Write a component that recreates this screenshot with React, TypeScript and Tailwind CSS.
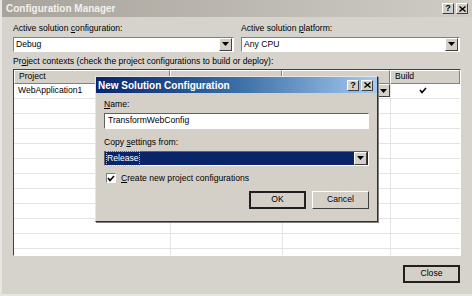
import React from "react";

const font = "font-['Liberation_Sans','Arial',sans-serif]";

const Arrow = () => (
  <div className="flex h-[13px] w-[13px] items-center justify-center border border-t-white border-l-white border-b-[#404040] border-r-[#404040] bg-[#d4d0c8]">
    <svg width="7" height="4" viewBox="0 0 7 4">
      <path d="M0 0h7L3.5 4z" fill="#000" />
    </svg>
  </div>
);

const Combo = ({ text }: { text: string }) => (
  <div className="flex h-[15px] items-center justify-between border border-t-[#808080] border-l-[#808080] border-b-white border-r-white bg-white pl-[2px] pr-[1px]">
    <span>{text}</span>
    <Arrow />
  </div>
);

const TitleButtons = () => (
  <div className="flex gap-[2px]">
    <div className="flex h-[11px] w-[12px] items-center justify-center border border-t-white border-l-white border-b-[#404040] border-r-[#404040] bg-[#d4d0c8] text-[9px] font-bold leading-none text-black">
      ?
    </div>
    <div className="flex h-[11px] w-[12px] items-center justify-center border border-t-white border-l-white border-b-[#404040] border-r-[#404040] bg-[#d4d0c8]">
      <svg width="7" height="6" viewBox="0 0 7 6">
        <path d="M0.5 0.5l6 5M6.5 0.5l-6 5" stroke="#000" strokeWidth="1.4" />
      </svg>
    </div>
  </div>
);

const Button = ({ label, isDefault }: { label: string; isDefault?: boolean }) => (
  <div
    className={
      "flex h-[18px] w-[57px] items-center justify-center bg-[#d4d0c8] " +
      (isDefault ? "border-2 border-[#202020]" : "border border-t-white border-l-white border-b-[#404040] border-r-[#404040]")
    }
  >
    {label}
  </div>
);

const CheckMark = () => (
  <svg width="8" height="7" viewBox="0 0 8 7">
    <path d="M1 3l2 2.5L7 1" stroke="#000" strokeWidth="1.6" fill="none" />
  </svg>
);

export default function App() {
  const rows = Array.from({ length: 12 });
  return (
    <div className={`${font} relative h-[296px] w-[472px] overflow-hidden bg-[#d6d3cd] text-[8.6px] text-black`}>
      <div className="flex h-full flex-col border-l-2 border-b-2 border-[#e8e6e2]">
        <div className="flex h-[17px] items-center justify-between bg-gradient-to-r from-[#a8a49c] to-[#cfccc6] pl-[4px] pr-[4px]">
          <span className="text-[10px] font-bold text-[#f2f1ee]">Configuration Manager</span>
          <TitleButtons />
        </div>

        <div className="flex flex-col px-[11px] pt-[5px]">
          <div className="flex gap-[7px]">
            <div className="flex w-[221px] flex-col gap-[2px]">
              <span>
                Active solution <span className="underline">c</span>onfiguration:
              </span>
              <Combo text="Debug" />
            </div>
            <div className="flex w-[219px] flex-col gap-[2px]">
              <span>
                Active solution <span className="underline">p</span>latform:
              </span>
              <Combo text="Any CPU" />
            </div>
          </div>

          <span className="mt-[3px]">
            Pr<span className="underline">o</span>ject contexts (check the project configurations to build or deploy):
          </span>

          <div className="mt-[1px] h-[187px] w-[448px] overflow-hidden border border-t-[#404040] border-l-[#404040] border-b-white border-r-white bg-white">
            <div className="grid grid-cols-[156px_112px_108px_70px]">
              {["Project", "", "", "Build"].map((h, i) => (
                <div
                  key={i}
                  className="flex h-[14px] items-center border border-t-white border-l-white border-b-[#808080] border-r-[#808080] bg-[#d4d0c8] pl-[4px]"
                >
                  {h}
                </div>
              ))}
              <div className="flex h-[15px] items-center border-b border-[#e4e4e4] pl-[4px]">WebApplication1</div>
              <div className="h-[15px] border-b border-l border-[#e4e4e4]" />
              <div className="flex h-[15px] items-center justify-end border-b border-l border-[#e4e4e4]">
                <Arrow />
              </div>
              <div className="flex h-[15px] items-center justify-center border-b border-l border-[#e4e4e4] pr-[6px]">
                <div className="flex h-[10px] w-[10px] items-center justify-center">
                  <CheckMark />
                </div>
              </div>
              {rows.map((_, r) =>
                [0, 1, 2, 3].map((c) => (
                  <div
                    key={`${r}-${c}`}
                    className={"h-[15px] border-b border-[#e4e4e4] " + (c > 0 ? "border-l" : "")}
                  />
                ))
              )}
            </div>
          </div>

          <div className="mt-[9px] flex justify-end pr-[1px]">
            <Button label="Close" isDefault />
          </div>
        </div>
      </div>

      {/* New Solution Configuration dialog */}
      <div className="absolute left-[95px] top-[76px] flex h-[146px] w-[283px] flex-col border border-t-[#e8e6e2] border-l-[#e8e6e2] border-b-[#303030] border-r-[#303030] bg-[#d4d0c8] shadow-[1px_1px_0_#808080]">
        <div className="flex h-[16px] items-center justify-between bg-gradient-to-r from-[#0a246a] via-[#3a6ea5] to-[#a6caf0] pl-[2px] pr-[4px]">
          <span className="text-[10px] font-bold text-white">New Solution Configuration</span>
          <TitleButtons />
        </div>
        <div className="flex flex-col px-[8px] pt-[5px]">
          <span>
            <span className="underline">N</span>ame:
          </span>
          <div className="mt-[2px] flex h-[16px] items-center border border-t-[#606060] border-l-[#606060] border-b-white border-r-white bg-white pl-[3px]">
            TransformWebConfig
          </div>
          <span className="mt-[7px]">
            Copy <span className="underline">s</span>ettings from:
          </span>
          <div className="mt-[2px] flex h-[15px] items-center justify-between border border-t-[#606060] border-l-[#606060] border-b-white border-r-white bg-[#0a246a] pl-[2px] pr-[1px] text-white">
            <span className="outline-1 outline-dotted outline-[#c0c0c0]">Release</span>
            <Arrow />
          </div>
          <div className="mt-[6px] flex items-center gap-[5px] pl-[2px]">
            <div className="flex h-[10px] w-[10px] items-center justify-center border border-t-[#808080] border-l-[#808080] border-b-white border-r-white bg-white">
              <CheckMark />
            </div>
            <span>
              <span className="underline">C</span>reate new project configurations
            </span>
          </div>
          <div className="mt-[6px] flex justify-end gap-[6px]">
            <Button label="OK" isDefault />
            <Button label="Cancel" />
          </div>
        </div>
      </div>
    </div>
  );
}
